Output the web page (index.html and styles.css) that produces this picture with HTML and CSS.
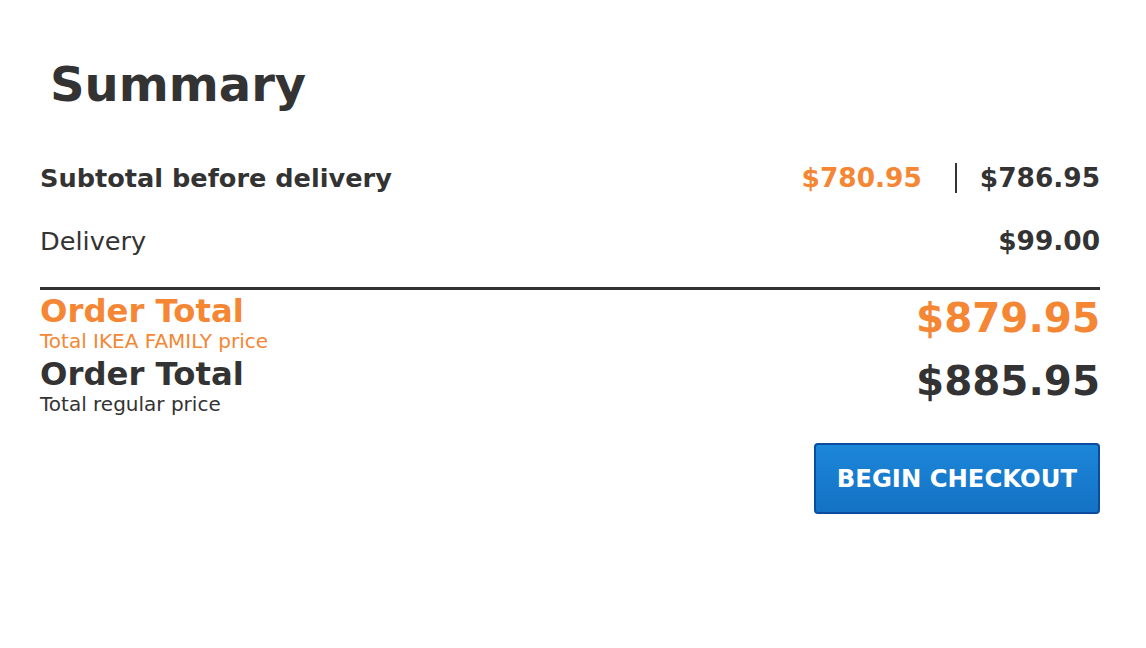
FILE: index.html
```html
<!DOCTYPE html>
<html lang="en">
<head>
<meta charset="utf-8">
<title>Summary</title>
<link rel="stylesheet" href="styles.css">
</head>
<body>
<main class="summary">
  <h1 class="summary__title">Summary</h1>
  <div class="row row--subtotal">
    <span class="row__label row__label--bold">Subtotal before delivery</span>
    <div class="prices">
      <span class="price price--family">$780.95</span>
      <span class="price price--divided">$786.95</span>
    </div>
  </div>
  <div class="row">
    <span class="row__label">Delivery</span>
    <span class="price">$99.00</span>
  </div>
  <div class="totals">
    <div class="total total--family">
      <div class="total__text">
        <div class="total__title">Order Total</div>
        <div class="total__sub">Total IKEA FAMILY price</div>
      </div>
      <div class="total__price">$879.95</div>
    </div>
    <div class="total">
      <div class="total__text">
        <div class="total__title">Order Total</div>
        <div class="total__sub">Total regular price</div>
      </div>
      <div class="total__price">$885.95</div>
    </div>
  </div>
  <div class="actions">
    <button class="checkout" type="button">BEGIN CHECKOUT</button>
  </div>
</main>
</body>
</html>
```

FILE: styles.css
```css
html, body {
  margin: 0;
  padding: 0;
  background: #ffffff;
}

body {
  font-family: "DejaVu Sans", Verdana, sans-serif;
  color: #333333;
}

.summary {
  padding: 56px 46px 0 40px;
}

.summary__title {
  margin: 0 0 46px 10px;
  font-size: 48px;
  line-height: 56px;
  font-weight: bold;
  color: #333333;
}

.row {
  display: flex;
  justify-content: space-between;
  align-items: center;
  height: 40px;
  font-size: 25.6px;
  line-height: 40px;
}

.row--subtotal {
  margin-bottom: 23px;
}

.row__label--bold {
  font-weight: bold;
}

.prices {
  display: flex;
  align-items: center;
}

.price {
  font-size: 26.4px;
  font-weight: bold;
}

.price--family {
  color: #f58634;
}

.price--divided {
  margin-left: 33px;
  padding-left: 23px;
  border-left: 2px solid #333333;
  line-height: 30px;
}

.totals {
  margin-top: 26px;
  border-top: 3px solid #333333;
  padding-top: 3px;
}

.total {
  display: flex;
  justify-content: space-between;
  align-items: flex-start;
  margin-bottom: 3px;
}

.total--family {
  color: #f58634;
}

.total__title {
  font-size: 32.3px;
  line-height: 36px;
  font-weight: bold;
}

.total__sub {
  font-size: 20px;
  line-height: 24px;
}

.total__price {
  margin-top: 3px;
  font-size: 40.4px;
  line-height: 44px;
  font-weight: bold;
}

.actions {
  display: flex;
  justify-content: flex-end;
  margin-top: 27px;
}

.checkout {
  font-family: "DejaVu Sans", Verdana, sans-serif;
  font-size: 24.3px;
  line-height: 29px;
  font-weight: bold;
  color: #ffffff;
  padding: 19px 21px;
  border: 2px solid #0b4c9f;
  border-radius: 4px;
  background: linear-gradient(#1c86d9, #1472c4);
  cursor: pointer;
}
```
